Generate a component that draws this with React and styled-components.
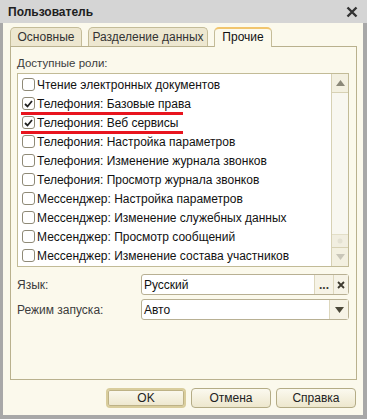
import React from 'react'
import styled, { createGlobalStyle, css } from 'styled-components'

const GlobalStyle = createGlobalStyle`
    html, body { margin: 0; padding: 0; background: #a9a9a9; }
    body { font-family: Arial, "Liberation Sans", sans-serif; font-size: 12px; color: #1a1a1a; }
`

const roles = [
    { title: 'Чтение электронных документов' },
    { title: 'Телефония: Базовые права', checked: true, marked: true },
    { title: 'Телефония: Веб сервисы', checked: true, marked: true },
    { title: 'Телефония: Настройка параметров' },
    { title: 'Телефония: Изменение журнала звонков' },
    { title: 'Телефония: Просмотр журнала звонков' },
    { title: 'Мессенджер: Настройка параметров' },
    { title: 'Мессенджер: Изменение служебных данных' },
    { title: 'Мессенджер: Просмотр сообщений' },
    { title: 'Мессенджер: Изменение состава участников' },
]

const Window = styled.div`
    width: 367px;
    height: 419px;
    box-sizing: border-box;
    display: flex;
    flex-direction: column;
    background: #a8a8a8;
    padding: 0 4px 4px 3px;
`
const TitleBar = styled.div`
    height: 23px;
    margin: 0 -4px 0 -3px;
    padding: 0 9px 0 8px;
    background: #d5d5d5;
    display: flex;
    align-items: center;
    justify-content: space-between;
    font-size: 12px;
    font-weight: bold;
    color: #202020;
`
const Body = styled.div`
    flex: 1;
    background: #fbf9ec;
    display: flex;
    flex-direction: column;
    padding: 4px 6px 7px 7px;
`
const TabRow = styled.div`
    display: flex;
    gap: 6px;
    height: 19px;
    position: relative;
    z-index: 1;
`
const Tab = styled.div`
    box-sizing: border-box;
    width: ${(p) => p.w}px;
    height: 19px;
    text-align: center;
    border: 1px solid #c4bc98;
    border-bottom: none;
    border-radius: 5px 5px 0 0;
    background: #ede7d0;
    color: #333;
    font-size: 12px;
    line-height: 19px;
    ${(p) => p.active && css`
        height: 20px;
        background: #fbf9ec;
        border-top: 2px solid #f1c56d;
        line-height: 17px;
        color: #111;
    `}
`
const Panel = styled.div`
    flex: 1;
    border: 1px solid #b9b18e;
    display: flex;
    flex-direction: column;
    padding: 6px 7px 0 6px;
`
const Caption = styled.div`
    color: #3c3c3c;
    height: 20px;
    line-height: 20px;
    font-size: 11.5px;
`
const List = styled.div`
    height: 194px;
    box-sizing: border-box;
    border: 1px solid #c2bb97;
    background: #fff;
    display: flex;
`
const Rows = styled.div`
    flex: 1;
    padding-top: 1px;
`
const Row = styled.div`
    position: relative;
    height: 19px;
    display: flex;
    align-items: center;
    padding-left: 4px;
    gap: 2px;
    color: #111;
    font-size: 12px;
    white-space: nowrap;
`
const Underline = styled.div`
    position: absolute;
    left: 3px;
    width: 162px;
    bottom: -2px;
    height: 3px;
    background: #e8141e;
`
const Box = styled.span`
    width: 11px;
    height: 11px;
    border: 1px solid #8f8a77;
    border-radius: 3px;
    background: #fff;
    display: flex;
    align-items: center;
    justify-content: center;
    flex-shrink: 0;
`
const Scroll = styled.div`
    width: 16px;
    border-left: 1px solid #d7d1b4;
    background: #f8f7f0;
    display: flex;
    flex-direction: column;
`
const ScrollBtn = styled.div`
    height: 19px;
    box-sizing: border-box;
    background: #f3f0e0;
    border-${(p) => (p.down ? 'top' : 'bottom')}: 1px solid #d7d1b4;
    display: flex;
    align-items: center;
    justify-content: center;
`
const Track = styled.div`
    flex: 1;
`
const Thumb = styled.div`
    height: 12px;
    background: #f1eee0;
    border-top: 1px solid #e3dfc8;
    display: flex;
    align-items: center;
    justify-content: center;
`
const FieldRow = styled.div`
    display: flex;
    align-items: center;
    height: 21px;
    margin-top: ${(p) => p.top}px;
`
const Label = styled.div`
    width: 124px;
    color: #3c3c3c;
    font-size: 12px;
`
const Field = styled.div`
    flex: 1;
    height: 21px;
    box-sizing: border-box;
    border: 1px solid #b8b093;
    border-radius: 3px;
    background: #fff;
    display: flex;
    align-items: center;
    padding-left: 2px;
    color: #111;
    font-size: 12px;
`
const FieldText = styled.span`
    flex: 1;
`
const FieldBtn = styled.div`
    width: ${(p) => p.w}px;
    height: 19px;
    border-left: 1px solid #ddd7bd;
    background: #f6f3e6;
    display: flex;
    align-items: center;
    justify-content: center;
    font-weight: bold;
    color: #3d3a2f;
    font-size: 12px;
`
const Footer = styled.div`
    display: flex;
    justify-content: flex-end;
    gap: 5px;
    padding: 8px 1px 0 0;
`
const Button = styled.button`
    width: 80px;
    height: 20px;
    border: 1px solid #b4ac86;
    border-radius: 4px;
    background: linear-gradient(#fbf9ef, #ede7cd);
    font-family: Arial, "Liberation Sans", sans-serif;
    font-size: 12px;
    color: #222;
    padding: 0;
    ${(p) => p.primary && css`
        border: 2px solid #d9cd9c;
        box-shadow: inset 0 0 0 1px #bdb286;
    `}
`

const Check = () => (
    <svg width="9" height="8" viewBox="0 0 9 8">
        <path d="M1 4 L3.5 6.5 L8 1" fill="none" stroke="#222" strokeWidth="1.8" />
    </svg>
)

const Arrow = ({ down, color = '#8b8878' }) => (
    <svg width="9" height="6" viewBox="0 0 9 6">
        <path d={down ? 'M0 0 H9 L4.5 6 Z' : 'M0 6 H9 L4.5 0 Z'} fill={color} />
    </svg>
)

export default function App() {
    return (
        <>
            <GlobalStyle />
            <Window>
                <TitleBar>
                    <span>Пользователь</span>
                    <svg width="12" height="12" viewBox="0 0 12 12">
                        <path d="M1.5 1.5 L10.5 10.5 M10.5 1.5 L1.5 10.5" stroke="#333" strokeWidth="2.4" />
                    </svg>
                </TitleBar>
                <Body>
                    <TabRow>
                        <Tab w={72}>Основные</Tab>
                        <Tab w={120}>Разделение данных</Tab>
                        <Tab w={58} active>Прочие</Tab>
                    </TabRow>
                    <Panel>
                        <Caption>Доступные роли:</Caption>
                        <List>
                            <Rows>
                                {roles.map((r, i) => (
                                    <Row key={i}>
                                        <Box>{r.checked && <Check />}</Box>
                                        {r.title}
                                        {r.marked && <Underline />}
                                    </Row>
                                ))}
                            </Rows>
                            <Scroll>
                                <ScrollBtn><Arrow /></ScrollBtn>
                                <Track />
                                <Thumb>
                                    <svg width="6" height="6"><circle cx="3" cy="3" r="2.5" fill="#e4e1d2" /></svg>
                                </Thumb>
                                <ScrollBtn down><Arrow down color="#c9c6b8" /></ScrollBtn>
                            </Scroll>
                        </List>
                        <FieldRow top={7}>
                            <Label>Язык:</Label>
                            <Field>
                                <FieldText>Русский</FieldText>
                                <FieldBtn w={18}>...</FieldBtn>
                                <FieldBtn w={14}>
                                    <svg width="8" height="8" viewBox="0 0 8 8">
                                        <path d="M1 1 L7 7 M7 1 L1 7" stroke="#3d3a2f" strokeWidth="1.8" />
                                    </svg>
                                </FieldBtn>
                            </Field>
                        </FieldRow>
                        <FieldRow top={4}>
                            <Label>Режим запуска:</Label>
                            <Field>
                                <FieldText>Авто</FieldText>
                                <FieldBtn w={18}><Arrow down color="#4a4738" /></FieldBtn>
                            </Field>
                        </FieldRow>
                    </Panel>
                    <Footer>
                        <Button primary>OK</Button>
                        <Button>Отмена</Button>
                        <Button>Справка</Button>
                    </Footer>
                </Body>
            </Window>
        </>
    )
}
